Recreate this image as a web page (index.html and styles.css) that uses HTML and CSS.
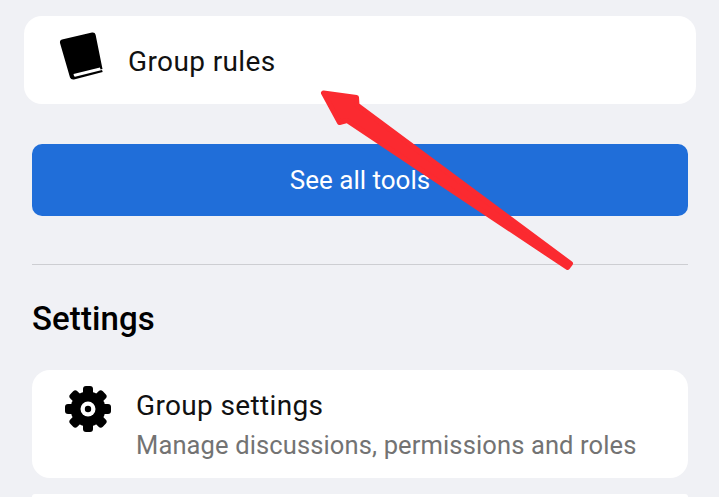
FILE: index.html
```html
<!DOCTYPE html>
<html lang="en">
<head>
    <meta charset="UTF-8">
    <meta name="viewport" content="width=device-width, initial-scale=1.0">
    <title>Group tools</title>
    <link rel="stylesheet" href="styles.css">
</head>
<body>
    <div class="container">
        <div class="rules-card">
            <svg class="book-icon" width="44" height="50" viewBox="0 0 44 50">
                <path d="M3 8.5 L33 1.5 Q36 1 36.6 3.8 L43.5 38 L41.5 38.5 L41 36.5 L14.5 43 L15 45 Q15.5 46 17 45.6 L43 39 L43.7 41 L15 48.5 Q12 49 11 46.5 L1 12 Q0.5 9 3 8.5 Z" fill="#000"/>
            </svg>
            <span class="rules-label">Group rules</span>
        </div>

        <button class="tools-button">See all tools</button>

        <div class="divider"></div>

        <h2 class="section-title">Settings</h2>

        <div class="settings-card">
            <svg class="gear-icon" width="48" height="48" viewBox="0 0 48 48">
                <g fill="#000">
                    <circle cx="24" cy="24" r="17.5"/>
                    <rect x="19" y="1" width="10" height="46" rx="3"/>
                    <rect x="19" y="1" width="10" height="46" rx="3" transform="rotate(45 24 24)"/>
                    <rect x="19" y="1" width="10" height="46" rx="3" transform="rotate(90 24 24)"/>
                    <rect x="19" y="1" width="10" height="46" rx="3" transform="rotate(135 24 24)"/>
                </g>
                <circle cx="24" cy="24" r="7.5" fill="#fff"/>
                <circle cx="24" cy="24" r="3.2" fill="#000"/>
            </svg>
            <div class="settings-text">
                <div class="settings-title">Group settings</div>
                <div class="settings-sub">Manage discussions, permissions and roles</div>
            </div>
        </div>

        <div class="next-card"></div>
    </div>

    <svg class="arrow" width="719" height="497" viewBox="0 0 719 497">
        <path d="M323.5 93 L356.5 97.5 L357 105 L570.5 263.5 L567.5 267.5 L347 120.5 L339.5 122.5 Z" fill="#fb2a30" stroke="#fb2a30" stroke-width="5" stroke-linejoin="round"/>
    </svg>
</body>
</html>
```

FILE: styles.css
```css
body {
    font-family: Roboto, "Liberation Sans", sans-serif;
    background-color: #f0f1f5;
    margin: 0;
    padding: 0;
}

.container {
    padding: 16px 31px 0 32px;
}

.rules-card {
    display: flex;
    align-items: center;
    height: 88px;
    margin: 0 -8px;
    background-color: #fff;
    border-radius: 18px;
}

.book-icon {
    margin-left: 35px;
    margin-top: -9px;
    flex-shrink: 0;
}

.rules-label {
    margin-left: 25px;
    margin-top: 3px;
    font-size: 28px;
    letter-spacing: 0.38px;
    color: #111;
}

.tools-button {
    display: block;
    width: 100%;
    height: 72px;
    margin-top: 40px;
    border: none;
    border-radius: 10px;
    background-color: #206ed9;
    color: #fff;
    font-family: inherit;
    font-size: 26px;
}

.divider {
    height: 1px;
    margin-top: 48px;
    background-color: #cdced2;
}

.section-title {
    margin: 34px 0 0;
    font-size: 33px;
    font-weight: 500;
    letter-spacing: 0.1px;
    line-height: 40px;
    color: #000;
}

.settings-card {
    display: flex;
    align-items: flex-start;
    height: 108px;
    margin-top: 31px;
    background-color: #fff;
    border-radius: 18px;
}

.gear-icon {
    margin: 15px 0 0 32px;
    flex-shrink: 0;
}

.settings-text {
    margin: 19px 0 0 24px;
}

.settings-title {
    font-size: 28px;
    letter-spacing: 0.35px;
    line-height: 34px;
    color: #111;
}

.settings-sub {
    margin-top: 6px;
    font-size: 25.5px;
    letter-spacing: 0.13px;
    line-height: 32px;
    white-space: nowrap;
    color: #737373;
}

.next-card {
    height: 3px;
    margin-top: 16px;
    background-color: #fff;
    border-radius: 18px 18px 0 0;
}

/* red annotation drawn on top of the screenshot */
.arrow {
    position: absolute;
    left: 0;
    top: 0;
}
```
